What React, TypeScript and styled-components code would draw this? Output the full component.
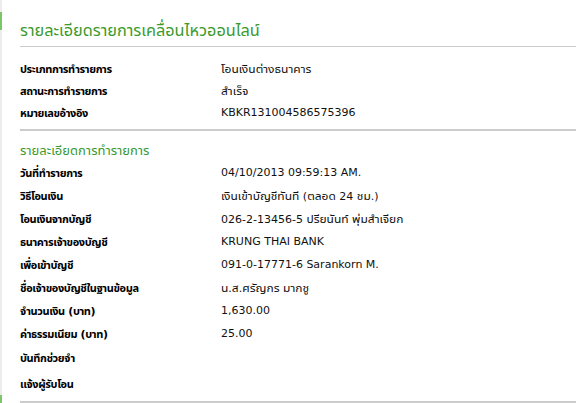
import React from "react";
import styled, { createGlobalStyle } from "styled-components";

const Global = createGlobalStyle`
  html, body { margin: 0; padding: 0; background: #fff; }
  body { font-family: "DejaVu Sans", sans-serif; }
`;

const Page = styled.div`
  display: flex;
  width: 576px;
  height: 403px;
  overflow: hidden;
  background: #fff;
`;

const Strip = styled.div`
  width: 2px;
  flex: none;
  display: flex;
  flex-direction: column;
  background: #ececec;
`;

const StripPart = styled.div<{ $h: number; $green?: boolean }>`
  height: ${(p) => p.$h}px;
  flex: none;
  background: ${(p) => (p.$green ? "#7cc66a" : "#ececec")};
`;

const Content = styled.div`
  flex: 1;
  padding-left: 18px;
  display: flex;
  flex-direction: column;
`;

const Title = styled.h1`
  margin: 0;
  padding-top: 20px;
  height: 28px;
  font-size: 16.3px;
  font-weight: normal;
  color: #3b9a2e;
  line-height: 20px;
  white-space: nowrap;
`;

const Divider = styled.div`
  height: 2px;
  background: #cccccc;
  margin-right: -10px;
`;

const Group = styled.div<{ $pt: number; $pb: number }>`
  display: flex;
  flex-direction: column;
  padding-top: ${(p) => p.$pt}px;
  padding-bottom: ${(p) => p.$pb}px;
`;

const SubTitle = styled.div`
  font-size: 13px;
  color: #3b9a2e;
  height: 22px;
  line-height: 22px;
`;

const Row = styled.div<{ $h: number }>`
  display: grid;
  grid-template-columns: 201px 1fr;
  height: ${(p) => p.$h}px;
  align-items: center;
  font-size: 11px;
  white-space: nowrap;
`;

const Label = styled.div`
  font-weight: bold;
  color: #000;
  letter-spacing: -0.4px;
`;

const Value = styled.div`
  color: #111;
`;

const Seg = styled.span<{ $thai: boolean; $scale: number }>`
  font-family: ${(p) =>
    p.$thai ? '"Noto Sans Thai UI", "Noto Sans Thai", sans-serif' : '"DejaVu Sans", sans-serif'};
  font-size: ${(p) => (p.$thai ? `${p.$scale}em` : "1em")};
`;

function Mixed({ text, scale = 1 }: { text: string; scale?: number }) {
  const parts = text.split(/([\u0E00-\u0E7F]+)/).filter((s) => s.length > 0);
  return (
    <>
      {parts.map((s, i) => (
        <Seg key={i} $thai={/[\u0E00-\u0E7F]/.test(s)} $scale={scale}>
          {s}
        </Seg>
      ))}
    </>
  );
}

const top = [
  ["ประเภทการทำรายการ", "โอนเงินต่างธนาคาร"],
  ["สถานะการทำรายการ", "สำเร็จ"],
  ["หมายเลขอ้างอิง", "KBKR131004586575396"],
];

const detail: [string, string, number][] = [
  ["วันที่ทำรายการ", "04/10/2013 09:59:13 AM.", 23],
  ["วิธีโอนเงิน", "เงินเข้าบัญชีทันที (ตลอด 24 ชม.)", 23],
  ["โอนเงินจากบัญชี", "026-2-13456-5 ปรียนันท์ พุ่มสำเจียก", 23],
  ["ธนาคารเจ้าของบัญชี", "KRUNG THAI BANK", 23],
  ["เพื่อเข้าบัญชี", "091-0-17771-6 Sarankorn M.", 23],
  ["ชื่อเจ้าของบัญชีในฐานข้อมูล", "น.ส.ศรัญกร มากชู", 23],
  ["จำนวนเงิน (บาท)", "1,630.00", 23],
  ["ค่าธรรมเนียม (บาท)", "25.00", 23],
  ["บันทึกช่วยจำ", "", 25],
  ["แจ้งผู้รับโอน", "", 27],
];

export default function App() {
  return (
    <>
      <Global />
      <Page>
        <Strip>
          <StripPart $h={12} />
          <StripPart $h={18} $green />
          <StripPart $h={365} />
          <StripPart $h={8} $green />
        </Strip>
        <Content>
          <Title>
            <Mixed text="รายละเอียดรายการเคลื่อนไหวออนไลน์" />
          </Title>
          <Divider />
          <Group $pt={10} $pb={6}>
            {top.map(([l, v]) => (
              <Row key={l} $h={22}>
                <Label>
                  <Mixed text={l} />
                </Label>
                <Value>
                  <Mixed text={v} scale={1.09} />
                </Value>
              </Row>
            ))}
          </Group>
          <Divider />
          <Group $pt={8} $pb={4}>
            <SubTitle>
              <Mixed text="รายละเอียดการทำรายการ" />
            </SubTitle>
            {detail.map(([l, v, h]) => (
              <Row key={l} $h={h}>
                <Label>
                  <Mixed text={l} />
                </Label>
                <Value>
                  <Mixed text={v} scale={1.09} />
                </Value>
              </Row>
            ))}
          </Group>
          <Divider />
        </Content>
      </Page>
    </>
  );
}
